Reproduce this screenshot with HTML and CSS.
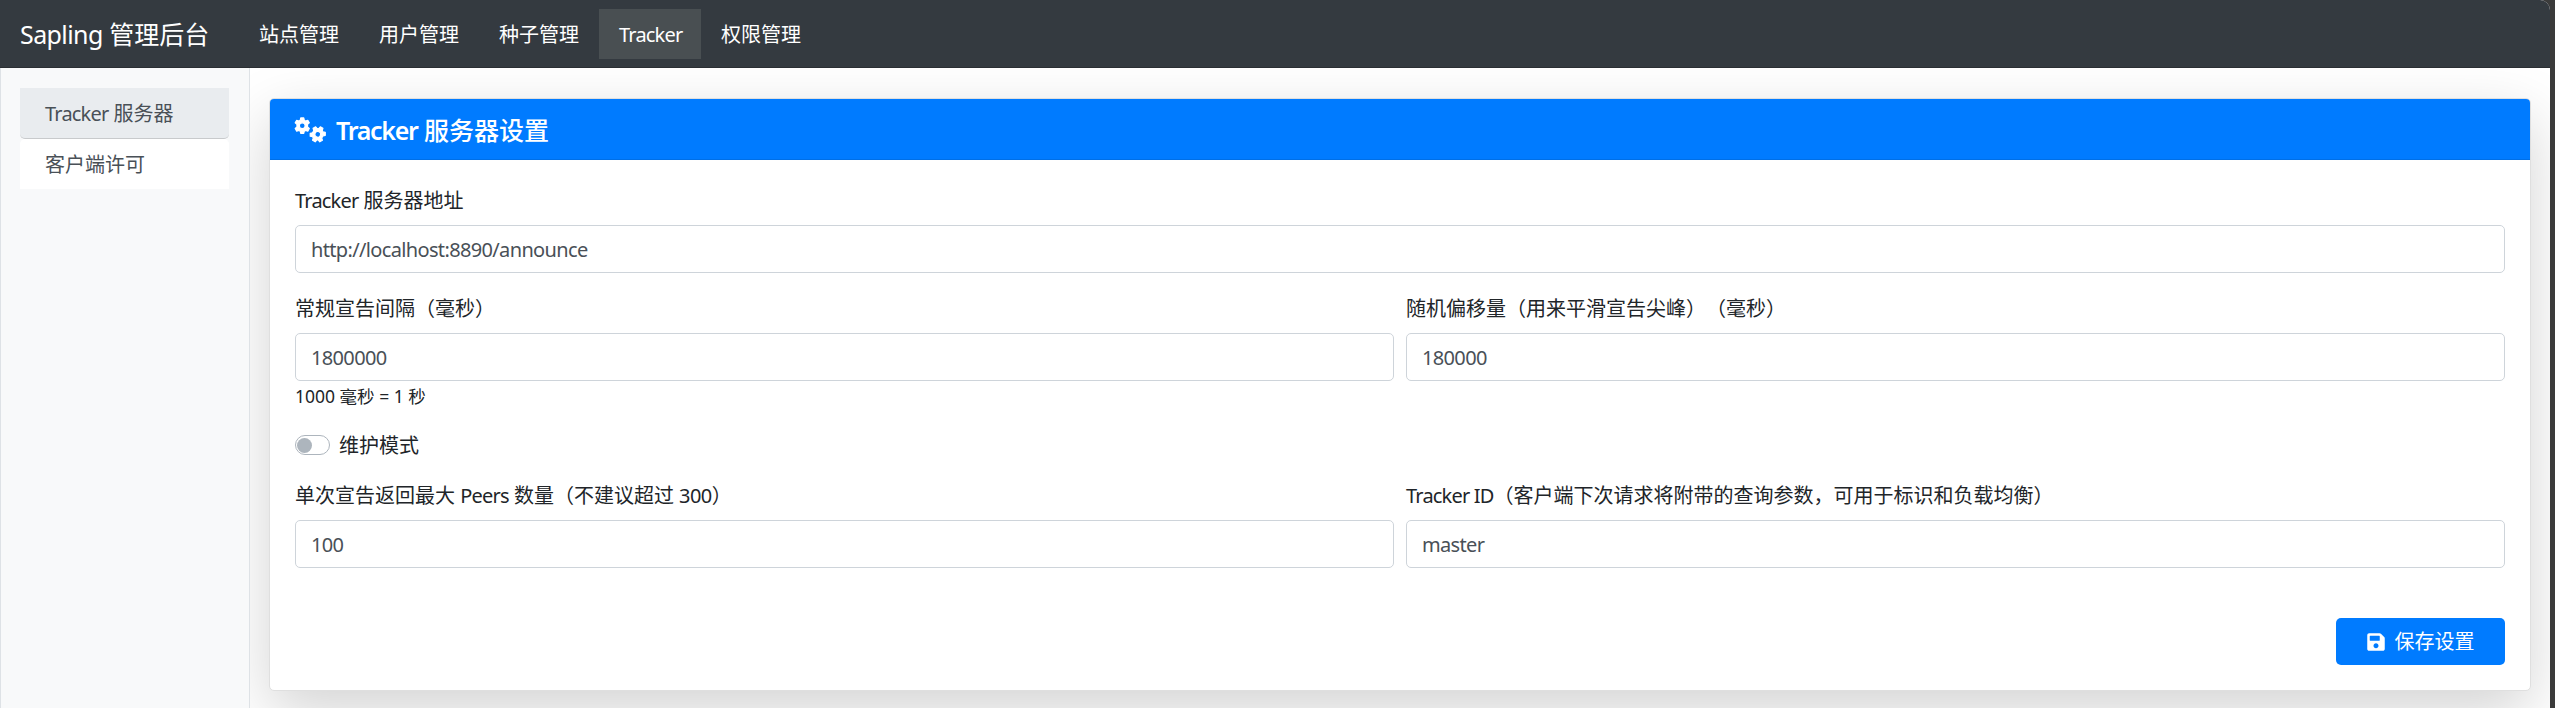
FILE: index.html
```html
<!DOCTYPE html>
<html lang="zh-CN">
<head>
<meta charset="utf-8">
<title>Sapling 管理后台</title>
<link rel="stylesheet" href="styles.css">
</head>
<body>
<div class="page">
  <nav class="navbar">
    <a class="brand"><span class="lat lat-brand">Sapling</span> 管理后台</a>
    <div class="nav-links">
      <a class="nav-link">站点管理</a>
      <a class="nav-link">用户管理</a>
      <a class="nav-link">种子管理</a>
      <a class="nav-link active"><span class="lat">Tracker</span></a>
      <a class="nav-link">权限管理</a>
    </div>
  </nav>
  <div class="layout">
    <aside class="sidebar">
      <a class="side-link active"><span class="lat">Tracker</span> 服务器</a>
      <a class="side-link">客户端许可</a>
    </aside>
    <main class="content">
      <section class="card">
        <header class="card-header">
          <svg class="icon-cogs" viewBox="0 0 640 512" fill="currentColor" stroke="currentColor" stroke-width="24" stroke-linejoin="round"><path fill-rule="evenodd" transform="translate(165 170)" d="M-30-155h60l10 46 26 15 45-15 30 52-35 31v52l35 31-30 52-45-15-26 15-10 46h-60l-10-46-26-15-45 15-30-52 35-31v-52l-35-31 30-52 45 15 26-15zM0-58a58 58 0 1 0 0 116a58 58 0 1 0 0-116z"/><path fill-rule="evenodd" transform="translate(475 342) rotate(30)" d="M-30-155h60l10 46 26 15 45-15 30 52-35 31v52l35 31-30 52-45-15-26 15-10 46h-60l-10-46-26-15-45 15-30-52 35-31v-52l-35-31 30-52 45 15 26-15zM0-58a58 58 0 1 0 0 116a58 58 0 1 0 0-116z"/></svg>
          <h5 class="card-title"><span class="lat lat-title">Tracker</span> 服务器设置</h5>
        </header>
        <form class="card-body">
          <div class="group">
            <label class="label"><span class="lat">Tracker</span> 服务器地址</label>
            <input class="control" value="http://localhost:8890/announce">
          </div>
          <div class="row">
            <div class="group">
              <label class="label">常规宣告间隔（毫秒）</label>
              <input class="control" value="1800000">
              <small class="hint">1000 毫秒 = 1 秒</small>
            </div>
            <div class="group">
              <label class="label">随机偏移量（用来平滑宣告尖峰）<span class="pad">（毫秒）</span></label>
              <input class="control" value="180000">
            </div>
          </div>
          <div class="switch-row"><span class="switch"></span><label class="switch-label">维护模式</label></div>
          <div class="row">
            <div class="group">
              <label class="label">单次宣告返回最大 <span class="lat">Peers</span> 数量（不建议超过 <span class="num">300</span>）</label>
              <input class="control" value="100">
            </div>
            <div class="group">
              <label class="label"><span class="lat">Tracker ID</span>（客户端下次请求将附带的查询参数，可用于标识和负载均衡）</label>
              <input class="control" value="master">
            </div>
          </div>
          <div class="actions">
            <button class="btn" type="button"><svg class="icon-save" viewBox="0 0 448 512" fill="currentColor"><path fill-rule="evenodd" d="M433.900 129.900l-83.900-83.900A48 48 0 0 0 316.100 32H48C21.500 32 0 53.500 0 80v352c0 26.500 21.500 48 48 48h352c26.500 0 48-21.500 48-48V163.900a48 48 0 0 0-14.100-34zM224 416c-35.300 0-64-28.700-64-64s28.700-64 64-64 64 28.700 64 64-28.700 64-64 64zm96-304.500V212c0 6.600-5.400 12-12 12H76c-6.600 0-12-5.400-12-12V108c0-6.600 5.400-12 12-12h228.500c3.200 0 6.200 1.300 8.500 3.500l3.500 3.500A12 12 0 0 1 320 111.500z"/></svg><span>保存设置</span></button>
          </div>
        </form>
      </section>
    </main>
  </div>
</div>
</body>
</html>
```
FILE: styles.css
```css
* { box-sizing: border-box; }
body {
  margin: 0;
  height: 708px;
  overflow: hidden;
  background: #3b3b3b;
  color: #212529;
  font: 20px/30px "Noto Sans", "Noto Sans CJK SC", sans-serif;
}
.page {
  width: 2550px;
  height: 708px;
  display: flex;
  flex-direction: column;
  background: #fff;
  border-radius: 0 10px 0 0;
  overflow: hidden;
}
.lat { letter-spacing: -0.8px; }
.lat-brand { letter-spacing: -0.6px; }
.lat-title { letter-spacing: -1.3px; font-weight: 600; }
.num { letter-spacing: -0.6px; }

.navbar {
  position: relative;
  z-index: 2;
  flex: none;
  height: 68px;
  padding: 0 20px;
  display: flex;
  align-items: center;
  background: #343a40;
  border-bottom: 1px solid #2a2e33;
  color: #fff;
}
.brand { width: 219px; font-size: 25px; white-space: nowrap; }
.nav-links { display: flex; }
.nav-link { height: 50px; padding: 11px 20px 9px; white-space: nowrap; }
.nav-link.active { width: 102px; background: #494f52; }

.layout { flex: 1; display: flex; min-height: 0; }
.sidebar {
  position: relative;
  z-index: 1;
  width: 250px;
  flex: none;
  padding: 20px 20px 0 19px;
  background: #f8f9fa;
  border: solid #dee2e6;
  border-width: 0 1px;
}
.side-link {
  display: block;
  height: 50px;
  padding: 11px 25px 9px;
  background: #fff;
  color: #495057;
  border-radius: 5px 5px 0 0;
}
.side-link.active {
  height: 51px;
  background: #e9ecef;
  border-bottom: 1px solid #c8cacc;
  border-radius: 0 0 5px 5px;
}
.content { flex: 1; padding: 30px 19px 0; }
.card {
  height: 593px;
  border: 1px solid #dfdfdf;
  border-radius: 5px;
  background: #fff;
  box-shadow: 0 20px 60px rgba(0, 0, 0, .175);
}
.card-header {
  height: 61px;
  padding: 1px 24px 0;
  display: flex;
  align-items: center;
  gap: 10px;
  color: #fff;
  background: #007bff;
  border-bottom: 1px solid #006fe6;
  border-radius: 4px 4px 0 0;
}
.icon-cogs { width: 32px; height: 26px; }
.card-title { margin: 0; font-size: 25px; font-weight: 500; }
.card-body { padding: 25px; }
.row { display: grid; grid-template-columns: 1fr 1fr; gap: 12px; }
.group { height: 108px; display: flex; flex-direction: column; }
.row .group { height: 126px; }
.label { padding-top: 1px; margin-bottom: 9px; white-space: nowrap; }
.pad { margin-left: 10px; }
.control {
  width: 100%;
  height: 48px;
  padding: 0 15px;
  border: 1px solid #ced4da;
  border-radius: 5px;
  background: #fff;
  color: #495057;
  font: inherit;
  letter-spacing: -0.65px;
  outline: 0;
}
.hint { margin-top: 2px; font-size: 17.5px; line-height: 26px; letter-spacing: 0; }
.switch-row { height: 30px; margin: 11px 0 20px; display: flex; align-items: center; gap: 9px; }
.switch-label { padding-top: 2px; }
.switch {
  width: 35px;
  height: 20px;
  padding: 2px 1px;
  border: 1px solid #adb5bd;
  border-radius: 10px;
}
.switch::before {
  content: "";
  display: block;
  width: 15px;
  height: 15px;
  border-radius: 50%;
  background: #adb5bd;
}
.actions { display: flex; justify-content: flex-end; margin-top: 12px; }
.btn {
  width: 169px;
  height: 47px;
  display: flex;
  align-items: center;
  justify-content: center;
  gap: 10px;
  border: 0;
  border-radius: 5px;
  background: #007bff;
  color: #fff;
  font: inherit;
}
.icon-save { width: 18px; height: 20px; }
```
